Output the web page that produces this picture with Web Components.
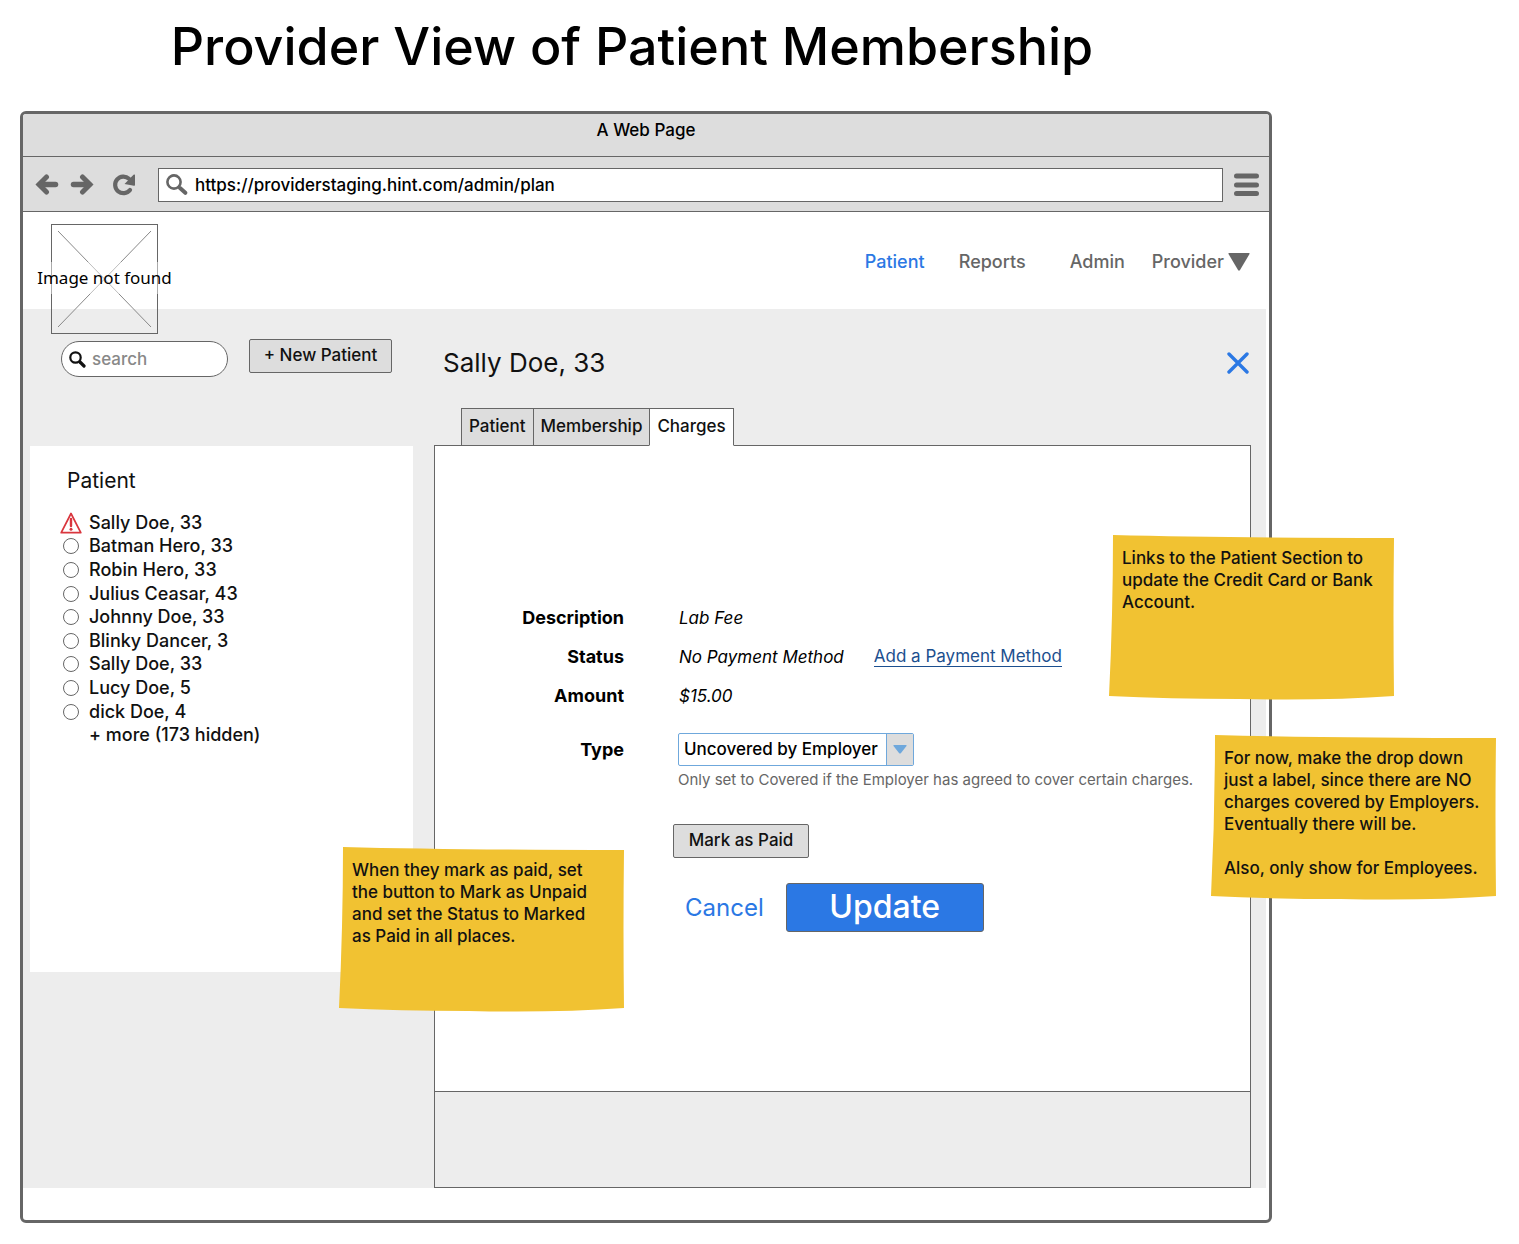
<!DOCTYPE html>
<html lang="en">
<head>
<meta charset="utf-8">
<title>Provider View of Patient Membership</title>
<style>
  html { background: #fff; }
  body {
    margin: 0;
    font-family: Inter, "Liberation Sans", sans-serif;
    font-size: 17px;
    font-weight: 500;
    line-height: 24px;
    color: #111;
    --line: #666;
    --grey: #ededed;
    --chrome: #ddd;
    --blue: #2b78e4;
    --note: #f1c232;
  }
</style>
</head>
<body>
<wire-board></wire-board>

<script>
const define = (name, html) => {
  const template = document.createElement('template');
  template.innerHTML = '<style>*{box-sizing:border-box}:host{box-sizing:border-box}</style>' + html;
  customElements.define(name, class extends HTMLElement {
    constructor() {
      super();
      this.attachShadow({ mode: 'open' }).append(template.content.cloneNode(true));
    }
  });
};

/* Sticky note with slightly curled paper edges */
define('sticky-note', `
  <style>
    :host { display: block; position: absolute; z-index: 2; width: 285px; height: 165px; font-size: 17px; line-height: 22px; color: #111; }
    svg { position: absolute; inset: 0; width: 100%; height: 100%; }
    .text { position: relative; padding: 12px 0 0 13px; white-space: nowrap; }
  </style>
  <svg viewBox="0 0 285 165" preserveAspectRatio="none" aria-hidden="true">
    <path fill="var(--note)" d="M4 0 Q120 3 285 3 Q284 80 285 161 Q215 166 130 164 Q60 164 0 161 Q4 80 4 0Z"/>
  </svg>
  <div class="text"><slot></slot></div>`);

define('grey-button', `
  <style>
    :host { display: block; }
    button { width: 100%; height: 34px; padding: 0 0 2px; border: 1px solid var(--line); border-radius: 2px; background: var(--chrome); color: #111; font: inherit; line-height: 22px; white-space: nowrap; }
  </style>
  <button type="button"><slot></slot></button>`);

define('image-missing', `
  <style>
    :host { display: grid; grid-template-columns: 107px; width: 107px; height: 110px; font-family: "Noto Sans", "Open Sans", sans-serif; font-size: 17px; font-weight: 400; line-height: 24px; color: #000; place-items: center; }
    svg, span { grid-area: 1 / 1; }
    span { padding-bottom: 2px; white-space: nowrap; }
  </style>
  <svg width="107" height="110" viewBox="0 0 107 110" fill="none" aria-hidden="true">
    <rect x=".5" y=".5" width="106" height="109" stroke="#666"/>
    <path d="M7 7 100 103M100 7 7 103" stroke="#888"/>
    <path d="M0 38H107V70H0z" fill="#fff" opacity=".45"/>
  </svg>
  <span>Image not found</span>`);

define('top-nav', `
  <style>
    :host { display: grid; grid-template-columns: 94px 111px 82px auto; font-size: 18px; line-height: 24px; }
    a { color: #666; text-decoration: none; white-space: nowrap; }
    a[aria-current] { color: var(--blue); }
    .menu { display: flex; align-items: center; gap: 4px; }
  </style>
  <a href="#patient" aria-current="page">Patient</a>
  <a href="#reports">Reports</a>
  <a href="#admin">Admin</a>
  <a href="#provider" class="menu">Provider
    <svg width="22" height="18" viewBox="0 0 22 18" aria-hidden="true"><path d="M1 0H21Q22 0 21.500 1L12 17Q11 18.500 10 17L.5 1Q0 0 1 0Z" fill="#666"/></svg>
  </a>`);

define('browser-bar', `
  <style>
    :host { display: block; background: var(--chrome); color: #000; }
    .title { height: 43px; padding-top: 4px; border-bottom: 1px solid var(--line); text-align: center; }
    .tools { display: flex; align-items: center; height: 55px; padding: 2px 10px 0 12px; border-bottom: 1px solid var(--line); }
    button { display: block; padding: 0; border: 0; background: none; line-height: 0; }
    .fwd { margin-left: 11px; }
    .reload { margin: 0 22px 0 18px; }
    .url { flex: 1; display: flex; align-items: center; gap: 7px; height: 34px; margin-right: 11px; padding-left: 7px; border: 1px solid var(--line); background: #fff; }
    input { flex: 1; min-width: 0; height: 30px; padding: 0; border: 0; outline: 0; background: none; font: inherit; color: #000; }
  </style>
  <div class="title">A Web Page</div>
  <div class="tools">
    <button type="button" aria-label="Back"><svg width="24" height="22" viewBox="0 0 24 22" fill="none" stroke="#666" stroke-linecap="round"><path d="M5 10.500H20.500" stroke-width="5.500"/><path d="M11.500 3 4 10.500 11.500 18" stroke-width="5"/></svg></button>
    <button type="button" class="fwd" aria-label="Forward"><svg width="24" height="22" viewBox="0 0 24 22" fill="none" stroke="#666" stroke-linecap="round"><path d="M3.500 10.500H19" stroke-width="5.500"/><path d="M12.500 3 20 10.500 12.500 18" stroke-width="5"/></svg></button>
    <button type="button" class="reload" aria-label="Reload"><svg width="24" height="22" viewBox="0 0 24 22" fill="none"><path d="M18 16A8.300 8.300 0 1 1 17 4.700" stroke="#666" stroke-width="4.200" stroke-linecap="round"/><path d="M23 .8V11Q23 12 22 11.800L12.500 10 21.500 .8Q22.500 0 23 .8Z" fill="#666"/></svg></button>
    <div class="url">
      <svg width="22" height="22" viewBox="0 0 22 22" fill="none" stroke="#666" stroke-linecap="round" aria-hidden="true"><circle cx="8" cy="8" r="6.600" stroke-width="2.600"/><path d="M14 14 19.300 18.800" stroke-width="4"/></svg>
      <input type="text" aria-label="Address" value="https://providerstaging.hint.com/admin/plan">
    </div>
    <button type="button" aria-label="Menu"><svg width="25" height="24" viewBox="0 0 25 24" stroke="#666" stroke-width="5" stroke-linecap="round"><path d="M2.500 3H22.500M2.500 12H22.500M2.500 20.500H22.500"/></svg></button>
  </div>`);

define('patient-search', `
  <style>
    :host { display: flex; align-items: flex-start; gap: 21px; padding: 30px 0 0 31px; height: 137px; }
    label { display: flex; align-items: center; gap: 6px; width: 167px; height: 36px; margin-top: 2px; padding: 0 12px 0 7px; border: 1px solid var(--line); border-radius: 18px; background: #fff; }
    svg { flex: none; }
    input { flex: 1; min-width: 0; height: 28px; padding: 0; border: 0; outline: 0; background: none; font: inherit; }
    input::placeholder { color: #888; opacity: 1; }
    grey-button { width: 143px; }
  </style>
  <label><svg width="17" height="17" viewBox="0 0 17 17" fill="none" stroke="#111" stroke-linecap="round" aria-hidden="true"><circle cx="6.500" cy="6.500" r="5.200" stroke-width="2.200"/><path d="M11 11 15 15" stroke-width="3.200"/></svg>
    <input type="search" placeholder="search" aria-label="Search patients"></label>
  <grey-button>+ New Patient</grey-button>`);

define('patient-row', `
  <style>
    :host { display: block; }
    label { display: grid; grid-template-columns: 22px 1fr; column-gap: 7px; align-items: center; height: 100%; white-space: nowrap; }
    .mark { display: grid; place-items: center; height: 22px; }
    input { appearance: none; width: 16px; height: 16px; margin: 0; border: 1px solid #666; border-radius: 50%; background: #fff; }
    svg { display: none; }
    :host([alert]) input { display: none; }
    :host([alert]) svg { display: block; }
    :host([more]) .mark * { display: none; }
  </style>
  <label><span class="mark"><input type="radio" name="patient">
    <svg width="22" height="22" viewBox="0 0 22 22" fill="none" aria-hidden="true"><path d="M11 1.500 20.800 20.700H1.200Z" stroke="#d9363e" stroke-width="1.700" stroke-linejoin="round"/><path d="M11 7V14" stroke="#d9363e" stroke-width="2.400" stroke-linecap="round"/><circle cx="11" cy="17.300" r="1.500" fill="#d9363e"/></svg></span>
    <span><slot></slot></span></label>`);

define('patient-list', `
  <style>
    :host { display: block; height: 526px; padding: 21px 0 0 30px; background: #fff; color: #111; }
    h2 { margin: 0 0 16px 7px; font-size: 21px; line-height: 28px; font-weight: 400; }
    .rows { display: grid; grid-auto-rows: 1fr; height: 236px; font-size: 18px; line-height: 22px; }
  </style>
  <h2>Patient</h2>
  <div class="rows">
    <patient-row alert>Sally Doe, 33</patient-row>
    <patient-row>Batman Hero, 33</patient-row>
    <patient-row>Robin Hero, 33</patient-row>
    <patient-row>Julius Ceasar, 43</patient-row>
    <patient-row>Johnny Doe, 33</patient-row>
    <patient-row>Blinky Dancer, 3</patient-row>
    <patient-row>Sally Doe, 33</patient-row>
    <patient-row>Lucy Doe, 5</patient-row>
    <patient-row>dick Doe, 4</patient-row>
    <patient-row more>+ more (173 hidden)</patient-row>
  </div>`);

define('tab-strip', `
  <style>
    :host { display: flex; position: relative; z-index: 1; padding-left: 27px; margin-bottom: -1px; }
    button { height: 38px; margin: 0 -1px 0 0; padding: 0 7px 2px; border: 1px solid var(--line); background: var(--chrome); color: #111; font: inherit; line-height: 24px; white-space: nowrap; }
    button[aria-selected="true"] { background: #fff; border-bottom-color: #fff; }
  </style>
  <button type="button" role="tab" aria-selected="false">Patient</button>
  <button type="button" role="tab" aria-selected="false">Membership</button>
  <button type="button" role="tab" aria-selected="true">Charges</button>`);

define('charge-form', `
  <style>
    :host { display: block; padding-top: 152px; }
    dl { display: grid; grid-template-columns: 189px 1fr; column-gap: 55px; grid-auto-rows: 39px; align-items: center; margin: 0; }
    dt, .type label { text-align: right; font-weight: 700; font-size: 18px; color: #000; }
    dd { display: flex; align-items: center; gap: 30px; margin: 0; white-space: nowrap; }
    em { font-weight: 400; color: #000; }
    a { font-weight: 400; line-height: 20px; color: #1c4f8f; text-decoration: none; border-bottom: 1px solid #1c4f8f; }
    .type { display: grid; grid-template-columns: 189px 236px; column-gap: 54px; align-items: center; margin-top: 18px; }
    .pick { display: grid; grid-template-columns: 1fr 27px; height: 33px; border: 1px solid #6fa8dc; border-radius: 2px; }
    select { grid-area: 1 / 1 / 2 / 3; appearance: none; padding: 0 30px 2px 5px; border: 0; outline: 0; background: none; color: #000; font: inherit; }
    .arrow { grid-area: 1 / 2; display: grid; place-items: center; background: var(--chrome); border-left: 1px solid #6fa8dc; pointer-events: none; }
    p { margin: 4px 0 0 243px; font-size: 15px; font-weight: 400; line-height: 20px; color: #666; white-space: nowrap; }
    grey-button { width: 136px; margin: 34px 0 25px 238px; }
    .end { display: flex; align-items: center; gap: 22px; margin-left: 250px; }
    .cancel { padding: 0; border: 0; background: none; color: var(--blue); font: inherit; font-size: 24px; font-weight: 400; line-height: 32px; }
    .update { width: 198px; height: 49px; padding: 0 0 2px; border: 1px solid var(--line); border-radius: 3px; background: var(--blue); color: #fff; font: inherit; font-size: 32px; line-height: 40px; }
  </style>
  <dl>
    <dt>Description</dt><dd><em>Lab Fee</em></dd>
    <dt>Status</dt><dd><em>No Payment Method</em><a href="#payment">Add a Payment Method</a></dd>
    <dt>Amount</dt><dd><em>$15.00</em></dd>
  </dl>
  <div class="type">
    <label for="type">Type</label>
    <div class="pick">
      <select id="type"><option>Uncovered by Employer</option><option>Covered by Employer</option></select>
      <span class="arrow"><svg width="14" height="9" viewBox="0 0 14 9" aria-hidden="true"><path d="M1 0H13Q14 0 13.500 1L8 8Q7 9 6 8L.5 1Q0 0 1 0Z" fill="#6fa8dc"/></svg></span>
    </div>
  </div>
  <p>Only set to Covered if the Employer has agreed to cover certain charges.</p>
  <grey-button>Mark as Paid</grey-button>
  <div class="end"><button type="button" class="cancel">Cancel</button><button type="button" class="update">Update</button></div>`);

define('patient-detail', `
  <style>
    :host { display: flex; flex-direction: column; }
    header { display: flex; align-items: center; justify-content: space-between; height: 99px; padding: 9px 2px 0 9px; }
    h2 { margin: 0; font-size: 26px; line-height: 32px; font-weight: 400; }
    button { padding: 0; border: 0; background: none; line-height: 0; }
    .panel { flex: 1; border: 1px solid var(--line); background: #fff; }
    footer { height: 96px; border: 1px solid var(--line); border-top: 0; background: var(--grey); }
  </style>
  <header><h2>Sally Doe, 33</h2>
    <button type="button" aria-label="Close"><svg width="22" height="22" viewBox="0 0 22 22" stroke="#2b78e4" stroke-width="3.400" stroke-linecap="round"><path d="M2 2 20 20M20 2 2 20"/></svg></button>
  </header>
  <tab-strip role="tablist"></tab-strip>
  <section class="panel"><charge-form></charge-form></section>
  <footer></footer>`);

define('web-window', `
  <style>
    :host { display: block; position: relative; border: 3px solid var(--line); border-radius: 6px; background: #fff; }
    browser-bar { border-radius: 3px 3px 0 0; }
    .top { display: flex; justify-content: space-between; align-items: flex-start; height: 97px; padding: 12px 19px 0 28px; }
    image-missing { position: relative; z-index: 1; }
    top-nav { margin-top: 26px; }
    .body { display: grid; grid-template-columns: 383px 1fr; column-gap: 21px; height: 879px; margin: 0 3px 32px 0; padding: 0 15px 0 7px; background: var(--grey); }
  </style>
  <browser-bar></browser-bar>
  <div class="top"><image-missing></image-missing><top-nav></top-nav></div>
  <div class="body">
    <div><patient-search></patient-search><patient-list></patient-list></div>
    <patient-detail></patient-detail>
  </div>
  <slot></slot>`);

define('wire-board', `
  <style>
    :host { display: block; padding: 0 247px 20px 20px; }
    h1 { margin: 0; height: 111px; padding: 15px 28px 0 0; text-align: center; font-size: 52px; line-height: 64px; font-weight: 500; color: #000; white-space: nowrap; }
    .unpaid { left: 316px; top: 733px; }
    .links { right: -125px; top: 421px; }
    .label { right: -227px; top: 621px; }
  </style>
  <h1>Provider View of Patient Membership</h1>
  <web-window>
    <sticky-note class="links">Links to the Patient Section to<br>update the Credit Card or Bank<br>Account.</sticky-note>
    <sticky-note class="label">For now, make the drop down<br>just a label, since there are NO<br>charges covered by Employers.<br>Eventually there will be.<br><br>Also, only show for Employees.</sticky-note>
    <sticky-note class="unpaid">When they mark as paid, set<br>the button to Mark as Unpaid<br>and set the Status to Marked<br>as Paid in all places.</sticky-note>
  </web-window>`);
</script>
</body>
</html>
